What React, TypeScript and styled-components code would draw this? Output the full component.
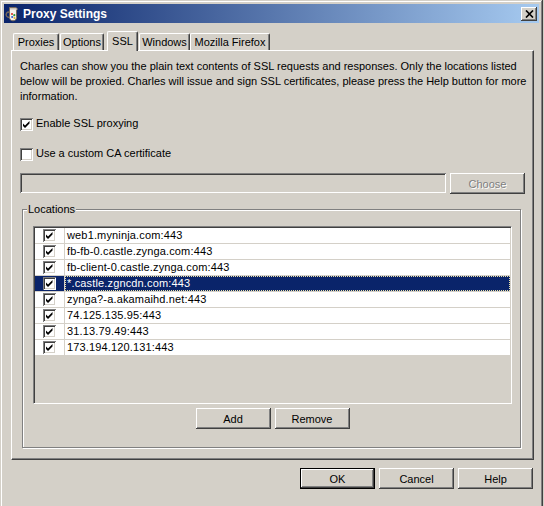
import React from "react";
import styled, { createGlobalStyle, css } from "styled-components";

const FACE = "#d4d0c8";

const GlobalStyle = createGlobalStyle`
  html, body {
    margin: 0;
    padding: 0;
    height: 506px;
    overflow: hidden;
    background: ${FACE};
  }
  body {
    font-family: "Liberation Sans", Arial, sans-serif;
    font-size: 11px;
    color: #000;
  }
`;

const raised = css`
  box-shadow: inset -1px -1px #404040, inset 1px 1px #ffffff,
    inset -2px -2px #808080, inset 2px 2px ${FACE};
`;

const sunken = css`
  box-shadow: inset 1px 1px #808080, inset -1px -1px #ffffff,
    inset 2px 2px #404040, inset -2px -2px ${FACE};
`;

const Window = styled.div`
  box-sizing: border-box;
  width: 543px;
  height: 530px;
  padding: 4px;
  background: ${FACE};
  box-shadow: inset -1px -1px #404040, inset 1px 1px ${FACE},
    inset -2px -2px #808080, inset 2px 2px #ffffff;
  display: flex;
  flex-direction: column;
`;

const TitleBar = styled.div`
  height: 19px;
  display: flex;
  align-items: center;
  padding: 0 2px 0 0;
  background: linear-gradient(to right, #0a246a, #a6caf0);
`;

const TitleText = styled.span`
  flex: 1;
  margin-left: 3px;
  color: #fff;
  font-weight: bold;
  font-size: 12px;
  white-space: nowrap;
`;

const CloseButton = styled.div`
  width: 16px;
  height: 14px;
  background: ${FACE};
  ${raised};
  display: flex;
  align-items: center;
  justify-content: center;
`;

const Body = styled.div`
  padding: 8px 5px 0 7px;
  display: flex;
  flex-direction: column;
`;

const TabStrip = styled.div`
  display: flex;
  align-items: flex-end;
  padding-left: 2px;
`;

const Tab = styled.div<{ $active?: boolean; $w: number; $ml?: number }>`
  box-sizing: border-box;
  position: relative;
  z-index: ${(p) => (p.$active ? 2 : 1)};
  width: ${(p) => p.$w}px;
  height: ${(p) => (p.$active ? 20 : 17)}px;
  margin-left: ${(p) => p.$ml ?? 0}px;
  margin-bottom: ${(p) => (p.$active ? -1 : 0)}px;
  padding-bottom: ${(p) => (p.$active ? 2 : 0)}px;
  display: flex;
  align-items: center;
  justify-content: center;
  background: ${FACE};
  border-top: 1px solid #fff;
  border-left: 1px solid #fff;
  border-right: 1px solid #404040;
  border-radius: 2px 2px 0 0;
  box-shadow: inset -1px 0 #808080;
  white-space: nowrap;
`;

const Panel = styled.div`
  box-sizing: border-box;
  height: 410px;
  padding: 8px 8px 0 8px;
  background: ${FACE};
  border-top: 1px solid #fff;
  border-left: 1px solid #fff;
  border-right: 1px solid #404040;
  border-bottom: 1px solid #404040;
  box-shadow: inset -1px -1px #808080;
  display: flex;
  flex-direction: column;
`;

const Description = styled.p`
  margin: 0;
  line-height: 15px;
  white-space: nowrap;
`;

const Line = styled.span`
  display: block;
`;

const CheckRow = styled.label<{ $mt: number }>`
  display: flex;
  align-items: flex-start;
  gap: 3px;
  height: 13px;
  margin-top: ${(p) => p.$mt}px;
`;

const CheckText = styled.span`
  margin-top: -2px;
  line-height: 15px;
`;

const Box = styled.span`
  box-sizing: border-box;
  flex: none;
  width: 13px;
  height: 13px;
  background: #fff;
  ${sunken};
  display: flex;
`;

const FieldRow = styled.div`
  display: flex;
  align-items: flex-start;
  gap: 4px;
  margin-top: 12px;
`;

const TextField = styled.div`
  flex: 1;
  height: 20px;
  background: ${FACE};
  ${sunken};
`;

const Button = styled.button<{ $default?: boolean; $disabled?: boolean }>`
  box-sizing: border-box;
  width: 75px;
  height: 21px;
  padding: 0;
  font: inherit;
  font-size: 11px;
  background: ${FACE};
  border: ${(p) => (p.$default ? "1px solid #000" : "none")};
  ${raised};
  color: ${(p) => (p.$disabled ? "#808080" : "#000")};
  text-shadow: ${(p) => (p.$disabled ? "1px 1px #fff" : "none")};
  cursor: default;
`;

const Group = styled.fieldset`
  margin: 9px 4px 0 2px;
  padding: 10px 8px 18px 10px;
  border: 1px solid #808080;
  box-shadow: inset 1px 1px #fff, 1px 1px #fff;
  min-width: 0;
`;

const Legend = styled.legend`
  margin-left: -6px;
  padding: 0 1px;
  line-height: 13px;
  background: ${FACE};
`;

const Pane = styled.div`
  box-sizing: border-box;
  height: 178px;
  padding: 1px;
  border: 1px solid;
  border-color: #808080 #fff #fff #808080;
  box-shadow: inset 1px 1px #404040, inset -1px -1px ${FACE};
  background: ${FACE};
`;

const Row = styled.div<{ $sel?: boolean }>`
  display: flex;
  height: 16px;
  box-sizing: border-box;
  border-bottom: 1px solid ${FACE};
  background: ${(p) => (p.$sel ? "#0a246a" : "#fff")};
  color: ${(p) => (p.$sel ? "#fff" : "#000")};
`;

const CheckCell = styled.div`
  box-sizing: border-box;
  width: 30px;
  border-right: 1px solid ${FACE};
  display: flex;
  align-items: center;
  justify-content: center;
`;

const TextCell = styled.div<{ $focus?: boolean }>`
  flex: 1;
  box-sizing: border-box;
  padding-left: 1px;
  line-height: 13px;
  letter-spacing: 0.15px;
  border: 1px ${(p) => (p.$focus ? "dotted #ece3a8" : "solid transparent")};
  white-space: nowrap;
`;

const ButtonBar = styled.div<{ $end?: boolean; $mt: number }>`
  display: flex;
  gap: 4px;
  justify-content: ${(p) => (p.$end ? "flex-end" : "center")};
  margin-top: ${(p) => p.$mt}px;
  padding-right: ${(p) => (p.$end ? 1 : 0)}px;
`;

const Check = ({ on }: { on?: boolean }) => (
  <Box>
    {on && (
      <svg width="13" height="13" viewBox="0 0 13 13">
        <path d="M3 5.5 L5 7.5 L9.5 3 L9.5 5.5 L5 10 L3 8 Z" fill="#000" />
      </svg>
    )}
  </Box>
);

const JugIcon = () => (
  <svg width="16" height="16" viewBox="0 0 16 16">
    <path
      d="M6 6 C2.5 5.5 1.5 8 2.5 10 C3.2 11.3 4.5 11.6 6 11.4"
      fill="none"
      stroke="#7a6a5a"
      strokeWidth="1.4"
    />
    <path
      d="M5.5 1.5 H12 L13.5 3 L12.5 4.2 V11.5 C12.5 13.5 11 14.8 9 14.8 C7 14.8 5.5 13.5 5.5 11.5 Z"
      fill="#f3f1ee"
      stroke="#7a6a5a"
    />
    <rect x="6" y="2" width="6" height="1.5" fill="#c9c2b8" />
    <circle cx="8" cy="8" r="1.1" fill="#d83a2a" />
    <circle cx="10.3" cy="9.2" r="1.1" fill="#2c9a3a" />
    <circle cx="8.2" cy="11" r="1.1" fill="#2f5fd0" />
    <circle cx="10.5" cy="12" r="1" fill="#e6b422" />
  </svg>
);

const CloseGlyph = () => (
  <svg width="9" height="8" viewBox="0 0 9 8">
    <path d="M1 0.5 L8 7.5 M8 0.5 L1 7.5" stroke="#000" strokeWidth="1.7" />
  </svg>
);

const locations = [
  "web1.myninja.com:443",
  "fb-fb-0.castle.zynga.com:443",
  "fb-client-0.castle.zynga.com:443",
  "*.castle.zgncdn.com:443",
  "zynga?-a.akamaihd.net:443",
  "74.125.135.95:443",
  "31.13.79.49:443",
  "173.194.120.131:443",
];

const tabs = [
  { label: "Proxies", w: 46 },
  { label: "Options", w: 44, ml: 1 },
  { label: "SSL", w: 31, ml: 3, active: true },
  { label: "Windows", w: 51, ml: 1 },
  { label: "Mozilla Firefox", w: 80 },
];

export default function App() {
  return (
    <>
      <GlobalStyle />
      <Window>
        <TitleBar>
          <JugIcon />
          <TitleText>Proxy Settings</TitleText>
          <CloseButton>
            <CloseGlyph />
          </CloseButton>
        </TitleBar>
        <Body>
          <TabStrip>
            {tabs.map((t) => (
              <Tab key={t.label} $w={t.w} $ml={t.ml} $active={t.active}>
                {t.label}
              </Tab>
            ))}
          </TabStrip>
          <Panel>
            <Description>
              <Line>
                Charles can show you the plain text contents of SSL requests and responses. Only the locations listed
              </Line>
              <Line>
                below will be proxied. Charles will issue and sign SSL certificates, please press the Help button for more
              </Line>
              <Line>information.</Line>
            </Description>
            <CheckRow $mt={14}>
              <Check on />
              <CheckText>Enable SSL proxying</CheckText>
            </CheckRow>
            <CheckRow $mt={17}>
              <Check />
              <CheckText>Use a custom CA certificate</CheckText>
            </CheckRow>
            <FieldRow>
              <TextField />
              <Button $disabled>Choose</Button>
            </FieldRow>
            <Group>
              <Legend>Locations</Legend>
              <Pane>
                {locations.map((loc, i) => (
                  <Row key={loc} $sel={i === 3}>
                    <CheckCell>
                      <Check on />
                    </CheckCell>
                    <TextCell $focus={i === 3}>{loc}</TextCell>
                  </Row>
                ))}
              </Pane>
              <ButtonBar $mt={4}>
                <Button>Add</Button>
                <Button>Remove</Button>
              </ButtonBar>
            </Group>
          </Panel>
          <ButtonBar $end $mt={8}>
            <Button $default>OK</Button>
            <Button>Cancel</Button>
            <Button>Help</Button>
          </ButtonBar>
        </Body>
      </Window>
    </>
  );
}
